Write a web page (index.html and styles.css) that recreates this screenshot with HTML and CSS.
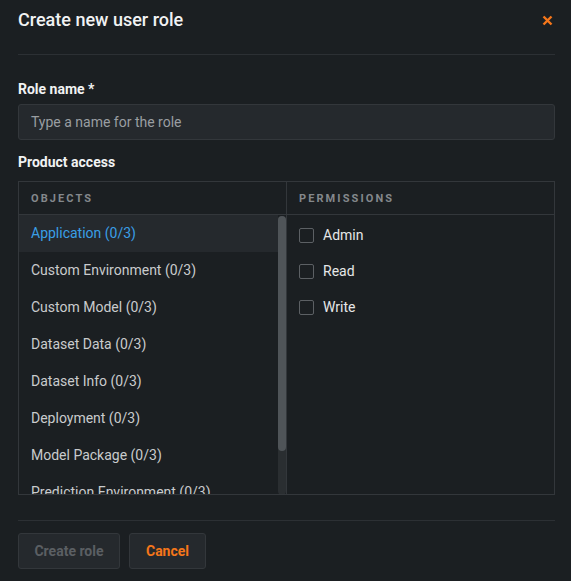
FILE: index.html
```html
<!DOCTYPE html>
<html lang="en">
<head>
<meta charset="utf-8">
<title>Create new user role</title>
<link rel="stylesheet" href="styles.css">
</head>
<body>
<div class="modal">
  <header class="modal-header">
    <h1 class="title">Create new user role</h1>
    <button class="close" aria-label="Close">
      <svg width="11" height="11" viewBox="0 0 11 11"><path d="M1.5 1.5 L9.5 9.5 M9.5 1.5 L1.5 9.5" stroke="#f5761a" stroke-width="2.4" stroke-linecap="butt"/></svg>
    </button>
  </header>
  <div class="modal-body">
    <label class="field-label">Role name *</label>
    <div class="input">Type a name for the role</div>
    <div class="section-label">Product access</div>
    <div class="table">
      <div class="col objects">
        <div class="col-head">OBJECTS</div>
        <div class="list-wrap">
          <ul class="list">
            <li class="item selected">Application (0/3)</li>
            <li class="item">Custom Environment (0/3)</li>
            <li class="item">Custom Model (0/3)</li>
            <li class="item">Dataset Data (0/3)</li>
            <li class="item">Dataset Info (0/3)</li>
            <li class="item">Deployment (0/3)</li>
            <li class="item">Model Package (0/3)</li>
            <li class="item">Prediction Environment (0/3)</li>
          </ul>
          <div class="scrollbar"><div class="thumb"></div></div>
        </div>
      </div>
      <div class="col perms">
        <div class="col-head">PERMISSIONS</div>
        <div class="perm"><span class="box"></span>Admin</div>
        <div class="perm"><span class="box"></span>Read</div>
        <div class="perm"><span class="box"></span>Write</div>
      </div>
    </div>
  </div>
  <footer class="modal-footer">
    <button class="btn disabled">Create role</button>
    <button class="btn cancel">Cancel</button>
  </footer>
</div>
</body>
</html>
```
FILE: styles.css
```css
* { box-sizing: border-box; }
html, body {
  margin: 0;
  padding: 0;
  background: #1b1f22;
  font-family: Roboto, "Liberation Sans", Arial, sans-serif;
  color: #e6e7e8;
}
.modal {
  width: 571px;
  height: 581px;
  padding: 0 16px 0 18px;
  overflow: hidden;
}
.modal-header {
  height: 55px;
  padding-top: 8px;
  display: flex;
  align-items: flex-start;
  justify-content: space-between;
  border-bottom: 1px solid #2c3034;
}
.title {
  margin: 0;
  font-size: 18px;
  line-height: 24px;
  font-weight: 500;
  color: #f1f2f3;
}
.close {
  background: none;
  border: 0;
  padding: 0;
  margin: 7px 2px 0 0;
  width: 11px;
  height: 11px;
  display: flex;
}
.modal-body {
  padding-top: 24px;
}
.field-label, .section-label {
  display: block;
  font-size: 14px;
  line-height: 20px;
  font-weight: 700;
  color: #f1f2f3;
}
.input {
  margin-top: 5px;
  height: 36px;
  border: 1px solid #33373b;
  background: #25292d;
  border-radius: 3px;
  padding: 0 12px;
  display: flex;
  align-items: center;
  font-size: 14px;
  color: #9a9ea2;
}
.section-label {
  margin-top: 12px;
}
.table {
  margin-top: 9px;
  height: 314px;
  border: 1px solid #33373b;
  display: flex;
}
.col {
  flex: 1;
  display: flex;
  flex-direction: column;
  min-width: 0;
}
.objects {
  border-right: 1px solid #33373b;
}
.col-head {
  height: 33px;
  flex: none;
  border-bottom: 1px solid #33373b;
  padding-left: 12px;
  display: flex;
  align-items: center;
  font-size: 11px;
  font-weight: 700;
  letter-spacing: 2.1px;
  color: #84888c;
}
.list-wrap {
  flex: 1;
  display: flex;
  min-height: 0;
  overflow: hidden;
}
.list {
  list-style: none;
  margin: 0;
  padding: 0;
  flex: 1;
}
.item {
  height: 37px;
  padding-left: 12px;
  padding-bottom: 1px;
  display: flex;
  align-items: center;
  font-size: 14px;
  color: #c9cbcd;
  white-space: nowrap;
}
.item.selected {
  background: #25292d;
  color: #3a9fe6;
}
.scrollbar {
  width: 8px;
  flex: none;
  margin-top: 1px;
  background: #2a2e31;
  border-radius: 4px;
  height: 279px;
}
.thumb {
  height: 235px;
  background: #4f5458;
  border-radius: 4px;
}
.perm {
  height: 36px;
  padding-left: 12px;
  display: flex;
  align-items: center;
  font-size: 14px;
  color: #e6e7e8;
}
.perms .col-head + .perm { margin-top: 2px; }
.box {
  width: 15px;
  height: 15px;
  border: 1px solid #5c6064;
  border-radius: 2px;
  margin-right: 9px;
}
.modal-footer {
  margin-top: 25px;
  border-top: 1px solid #2c3034;
  padding-top: 12px;
  display: flex;
  gap: 9px;
}
.btn {
  height: 36px;
  border: 1px solid #33373b;
  background: #25292d;
  border-radius: 3px;
  font-family: Roboto, "Liberation Sans", Arial, sans-serif;
  font-size: 14px;
  font-weight: 700;
  padding: 0;
  white-space: nowrap;
  text-align: center;
}
.btn.disabled {
  color: #5b5f63;
  width: 102px;
}
.btn.cancel {
  color: #f5761a;
  width: 77px;
}
```
